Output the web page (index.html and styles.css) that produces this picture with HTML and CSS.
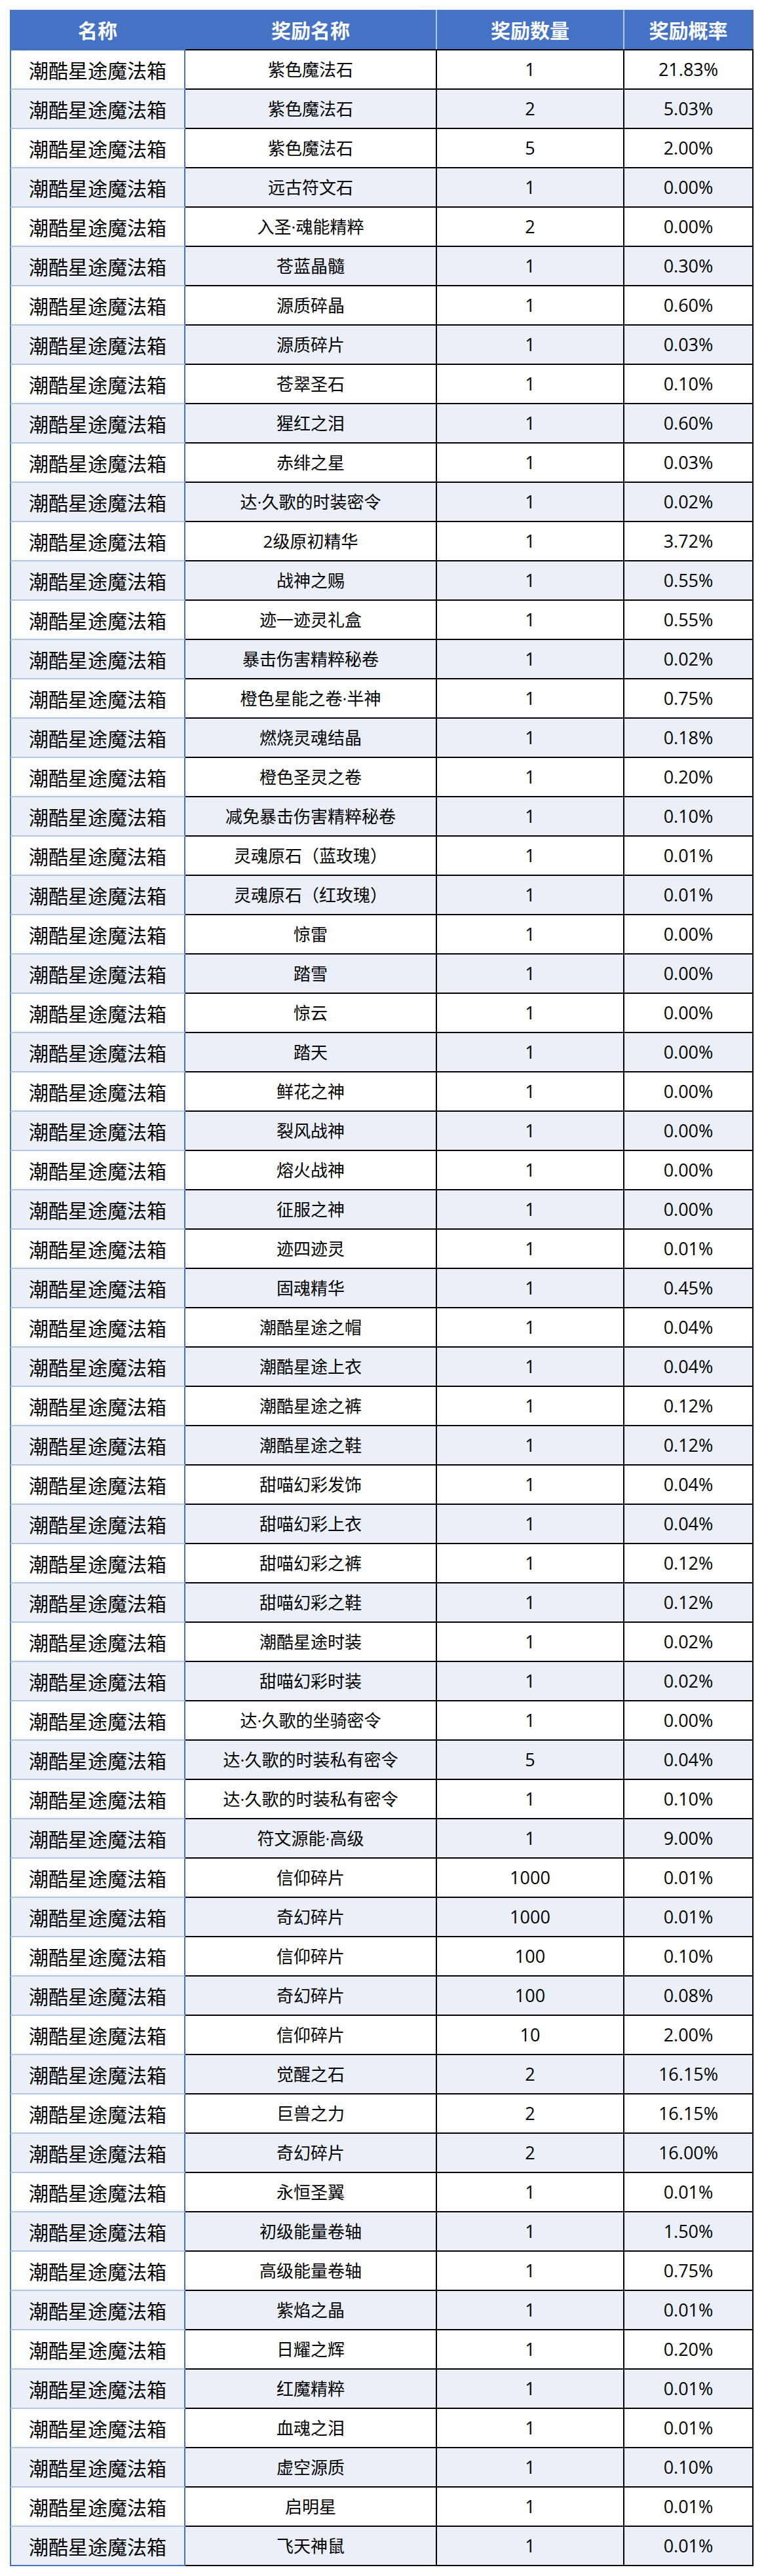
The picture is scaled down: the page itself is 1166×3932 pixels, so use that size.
FILE: index.html
```html
<!DOCTYPE html>
<html lang="zh-CN">
<head>
<meta charset="utf-8">
<title>潮酷星途魔法箱</title>
<link rel="stylesheet" href="styles.css">
</head>
<body>
<table class="prob">
<colgroup><col class="w1"><col class="w2"><col class="w3"><col class="w4"></colgroup>
<thead>
<tr><th class="c1">名称</th><th class="c2">奖励名称</th><th class="c3">奖励数量</th><th class="c4">奖励概率</th></tr>
</thead>
<tbody>
<tr><td class="c1">潮酷星途魔法箱</td><td class="c2">紫色魔法石</td><td class="c3">1</td><td class="c4">21.83%</td></tr>
<tr><td class="c1">潮酷星途魔法箱</td><td class="c2">紫色魔法石</td><td class="c3">2</td><td class="c4">5.03%</td></tr>
<tr><td class="c1">潮酷星途魔法箱</td><td class="c2">紫色魔法石</td><td class="c3">5</td><td class="c4">2.00%</td></tr>
<tr><td class="c1">潮酷星途魔法箱</td><td class="c2">远古符文石</td><td class="c3">1</td><td class="c4">0.00%</td></tr>
<tr><td class="c1">潮酷星途魔法箱</td><td class="c2">入圣·魂能精粹</td><td class="c3">2</td><td class="c4">0.00%</td></tr>
<tr><td class="c1">潮酷星途魔法箱</td><td class="c2">苍蓝晶髓</td><td class="c3">1</td><td class="c4">0.30%</td></tr>
<tr><td class="c1">潮酷星途魔法箱</td><td class="c2">源质碎晶</td><td class="c3">1</td><td class="c4">0.60%</td></tr>
<tr><td class="c1">潮酷星途魔法箱</td><td class="c2">源质碎片</td><td class="c3">1</td><td class="c4">0.03%</td></tr>
<tr><td class="c1">潮酷星途魔法箱</td><td class="c2">苍翠圣石</td><td class="c3">1</td><td class="c4">0.10%</td></tr>
<tr><td class="c1">潮酷星途魔法箱</td><td class="c2">猩红之泪</td><td class="c3">1</td><td class="c4">0.60%</td></tr>
<tr><td class="c1">潮酷星途魔法箱</td><td class="c2">赤绯之星</td><td class="c3">1</td><td class="c4">0.03%</td></tr>
<tr><td class="c1">潮酷星途魔法箱</td><td class="c2">达·久歌的时装密令</td><td class="c3">1</td><td class="c4">0.02%</td></tr>
<tr><td class="c1">潮酷星途魔法箱</td><td class="c2">2级原初精华</td><td class="c3">1</td><td class="c4">3.72%</td></tr>
<tr><td class="c1">潮酷星途魔法箱</td><td class="c2">战神之赐</td><td class="c3">1</td><td class="c4">0.55%</td></tr>
<tr><td class="c1">潮酷星途魔法箱</td><td class="c2">迹一迹灵礼盒</td><td class="c3">1</td><td class="c4">0.55%</td></tr>
<tr><td class="c1">潮酷星途魔法箱</td><td class="c2">暴击伤害精粹秘卷</td><td class="c3">1</td><td class="c4">0.02%</td></tr>
<tr><td class="c1">潮酷星途魔法箱</td><td class="c2">橙色星能之卷·半神</td><td class="c3">1</td><td class="c4">0.75%</td></tr>
<tr><td class="c1">潮酷星途魔法箱</td><td class="c2">燃烧灵魂结晶</td><td class="c3">1</td><td class="c4">0.18%</td></tr>
<tr><td class="c1">潮酷星途魔法箱</td><td class="c2">橙色圣灵之卷</td><td class="c3">1</td><td class="c4">0.20%</td></tr>
<tr><td class="c1">潮酷星途魔法箱</td><td class="c2">减免暴击伤害精粹秘卷</td><td class="c3">1</td><td class="c4">0.10%</td></tr>
<tr><td class="c1">潮酷星途魔法箱</td><td class="c2">灵魂原石（蓝玫瑰）</td><td class="c3">1</td><td class="c4">0.01%</td></tr>
<tr><td class="c1">潮酷星途魔法箱</td><td class="c2">灵魂原石（红玫瑰）</td><td class="c3">1</td><td class="c4">0.01%</td></tr>
<tr><td class="c1">潮酷星途魔法箱</td><td class="c2">惊雷</td><td class="c3">1</td><td class="c4">0.00%</td></tr>
<tr><td class="c1">潮酷星途魔法箱</td><td class="c2">踏雪</td><td class="c3">1</td><td class="c4">0.00%</td></tr>
<tr><td class="c1">潮酷星途魔法箱</td><td class="c2">惊云</td><td class="c3">1</td><td class="c4">0.00%</td></tr>
<tr><td class="c1">潮酷星途魔法箱</td><td class="c2">踏天</td><td class="c3">1</td><td class="c4">0.00%</td></tr>
<tr><td class="c1">潮酷星途魔法箱</td><td class="c2">鲜花之神</td><td class="c3">1</td><td class="c4">0.00%</td></tr>
<tr><td class="c1">潮酷星途魔法箱</td><td class="c2">裂风战神</td><td class="c3">1</td><td class="c4">0.00%</td></tr>
<tr><td class="c1">潮酷星途魔法箱</td><td class="c2">熔火战神</td><td class="c3">1</td><td class="c4">0.00%</td></tr>
<tr><td class="c1">潮酷星途魔法箱</td><td class="c2">征服之神</td><td class="c3">1</td><td class="c4">0.00%</td></tr>
<tr><td class="c1">潮酷星途魔法箱</td><td class="c2">迹四迹灵</td><td class="c3">1</td><td class="c4">0.01%</td></tr>
<tr><td class="c1">潮酷星途魔法箱</td><td class="c2">固魂精华</td><td class="c3">1</td><td class="c4">0.45%</td></tr>
<tr><td class="c1">潮酷星途魔法箱</td><td class="c2">潮酷星途之帽</td><td class="c3">1</td><td class="c4">0.04%</td></tr>
<tr><td class="c1">潮酷星途魔法箱</td><td class="c2">潮酷星途上衣</td><td class="c3">1</td><td class="c4">0.04%</td></tr>
<tr><td class="c1">潮酷星途魔法箱</td><td class="c2">潮酷星途之裤</td><td class="c3">1</td><td class="c4">0.12%</td></tr>
<tr><td class="c1">潮酷星途魔法箱</td><td class="c2">潮酷星途之鞋</td><td class="c3">1</td><td class="c4">0.12%</td></tr>
<tr><td class="c1">潮酷星途魔法箱</td><td class="c2">甜喵幻彩发饰</td><td class="c3">1</td><td class="c4">0.04%</td></tr>
<tr><td class="c1">潮酷星途魔法箱</td><td class="c2">甜喵幻彩上衣</td><td class="c3">1</td><td class="c4">0.04%</td></tr>
<tr><td class="c1">潮酷星途魔法箱</td><td class="c2">甜喵幻彩之裤</td><td class="c3">1</td><td class="c4">0.12%</td></tr>
<tr><td class="c1">潮酷星途魔法箱</td><td class="c2">甜喵幻彩之鞋</td><td class="c3">1</td><td class="c4">0.12%</td></tr>
<tr><td class="c1">潮酷星途魔法箱</td><td class="c2">潮酷星途时装</td><td class="c3">1</td><td class="c4">0.02%</td></tr>
<tr><td class="c1">潮酷星途魔法箱</td><td class="c2">甜喵幻彩时装</td><td class="c3">1</td><td class="c4">0.02%</td></tr>
<tr><td class="c1">潮酷星途魔法箱</td><td class="c2">达·久歌的坐骑密令</td><td class="c3">1</td><td class="c4">0.00%</td></tr>
<tr><td class="c1">潮酷星途魔法箱</td><td class="c2">达·久歌的时装私有密令</td><td class="c3">5</td><td class="c4">0.04%</td></tr>
<tr><td class="c1">潮酷星途魔法箱</td><td class="c2">达·久歌的时装私有密令</td><td class="c3">1</td><td class="c4">0.10%</td></tr>
<tr><td class="c1">潮酷星途魔法箱</td><td class="c2">符文源能·高级</td><td class="c3">1</td><td class="c4">9.00%</td></tr>
<tr><td class="c1">潮酷星途魔法箱</td><td class="c2">信仰碎片</td><td class="c3">1000</td><td class="c4">0.01%</td></tr>
<tr><td class="c1">潮酷星途魔法箱</td><td class="c2">奇幻碎片</td><td class="c3">1000</td><td class="c4">0.01%</td></tr>
<tr><td class="c1">潮酷星途魔法箱</td><td class="c2">信仰碎片</td><td class="c3">100</td><td class="c4">0.10%</td></tr>
<tr><td class="c1">潮酷星途魔法箱</td><td class="c2">奇幻碎片</td><td class="c3">100</td><td class="c4">0.08%</td></tr>
<tr><td class="c1">潮酷星途魔法箱</td><td class="c2">信仰碎片</td><td class="c3">10</td><td class="c4">2.00%</td></tr>
<tr><td class="c1">潮酷星途魔法箱</td><td class="c2">觉醒之石</td><td class="c3">2</td><td class="c4">16.15%</td></tr>
<tr><td class="c1">潮酷星途魔法箱</td><td class="c2">巨兽之力</td><td class="c3">2</td><td class="c4">16.15%</td></tr>
<tr><td class="c1">潮酷星途魔法箱</td><td class="c2">奇幻碎片</td><td class="c3">2</td><td class="c4">16.00%</td></tr>
<tr><td class="c1">潮酷星途魔法箱</td><td class="c2">永恒圣翼</td><td class="c3">1</td><td class="c4">0.01%</td></tr>
<tr><td class="c1">潮酷星途魔法箱</td><td class="c2">初级能量卷轴</td><td class="c3">1</td><td class="c4">1.50%</td></tr>
<tr><td class="c1">潮酷星途魔法箱</td><td class="c2">高级能量卷轴</td><td class="c3">1</td><td class="c4">0.75%</td></tr>
<tr><td class="c1">潮酷星途魔法箱</td><td class="c2">紫焰之晶</td><td class="c3">1</td><td class="c4">0.01%</td></tr>
<tr><td class="c1">潮酷星途魔法箱</td><td class="c2">日耀之辉</td><td class="c3">1</td><td class="c4">0.20%</td></tr>
<tr><td class="c1">潮酷星途魔法箱</td><td class="c2">红魔精粹</td><td class="c3">1</td><td class="c4">0.01%</td></tr>
<tr><td class="c1">潮酷星途魔法箱</td><td class="c2">血魂之泪</td><td class="c3">1</td><td class="c4">0.01%</td></tr>
<tr><td class="c1">潮酷星途魔法箱</td><td class="c2">虚空源质</td><td class="c3">1</td><td class="c4">0.10%</td></tr>
<tr><td class="c1">潮酷星途魔法箱</td><td class="c2">启明星</td><td class="c3">1</td><td class="c4">0.01%</td></tr>
<tr><td class="c1">潮酷星途魔法箱</td><td class="c2">飞天神鼠</td><td class="c3">1</td><td class="c4">0.01%</td></tr>
</tbody>
</table>
</body>
</html>
```
FILE: styles.css
```css
html, body {
  margin: 0;
  padding: 0;
  background: #ffffff;
}
body {
  padding: 15px 0 0 15px;
  font-family: "Open Sans", "Noto Sans CJK SC", sans-serif;
  color: #000000;
}
.prob {
  border-collapse: separate;
  border-spacing: 0;
  table-layout: fixed;
  width: 1135px;
}
.w1 { width: 268px; }
.w2 { width: 384px; }
.w3 { width: 286px; }
.w4 { width: 197px; }

.prob th, .prob td {
  padding: 0;
  text-align: center;
  vertical-align: middle;
  white-space: nowrap;
  box-sizing: border-box;
}

.prob th {
  height: 60px;
  background: #4472c4;
  color: #ffffff;
  font-family: "Noto Sans CJK SC", sans-serif;
  font-weight: 700;
  font-size: 30px;
  line-height: 30px;
}
.prob th.c1 {
  border-left: 2px solid #4472c4;
  border-right: 2px solid #4472c4;
}
.prob th.c2,
.prob th.c3 {
  border-right: 2px solid #b4c6e7;
}
.prob th.c4 {
  border-right: 2px solid #4472c4;
}

.prob td {
  height: 60px;
  font-size: 26px;
  line-height: 30px;
  border-bottom: 2px solid #000000;
  border-right: 2px solid #000000;
}
.prob td.c1 {
  font-family: "Noto Sans CJK SC", sans-serif;
  font-size: 30px;
  border-left: 2px solid #4472c4;
  border-right: 2px solid #4472c4;
  border-bottom: 2px solid #b4c6e7;
}
.prob td.c2 {
  font-family: "Open Sans", "Noto Sans CJK SC", sans-serif;
}
.prob td.c3,
.prob td.c4 {
  font-size: 27px;
}
.prob tbody tr:first-child td {
  height: 62px;
  border-top: 2px solid #000000;
}
.prob tbody tr:first-child td.c1 {
  border-top: 2px solid #4472c4;
}
.prob tbody tr:last-child td.c1 {
  border-bottom: 2px solid #4472c4;
}
.prob tbody tr:nth-child(even) td {
  background: #eaeff8;
}
```
